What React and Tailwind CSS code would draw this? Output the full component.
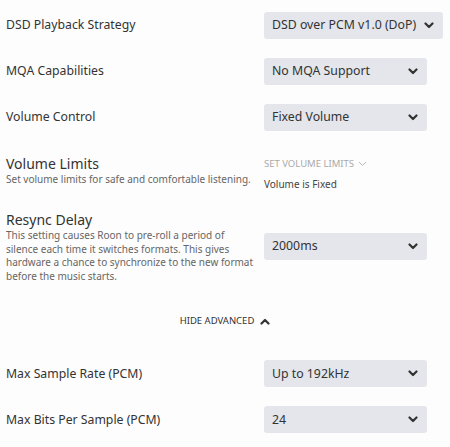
import React from "react";

const Chevron = ({ up = false, className = "" }) => (
  <svg width="10" height="7" viewBox="0 0 10 7" className={`shrink-0 ${className}`}>
    <polyline
      points={up ? "1.5,5.5 5,2 8.5,5.5" : "1.5,1.5 5,5 8.5,1.5"}
      fill="none"
      stroke="currentColor"
      strokeWidth="2.2"
      strokeLinecap="round"
      strokeLinejoin="round"
    />
  </svg>
);

const Select = ({ value }) => (
  <div className="inline-flex shrink-0 items-center justify-between min-w-[163px] h-[27px] pl-2 pr-[9px] gap-[8px] bg-[#e4e6eb] rounded-[3px] text-[12.3px] text-[#333] whitespace-nowrap">
    <span>{value}</span>
    <Chevron />
  </div>
);

const Row = ({ label, value, className = "" }) => (
  <div className={`flex items-center ${className}`}>
    <div className="w-[258px] shrink-0 text-[12.25px] text-[#333]">{label}</div>
    <Select value={value} />
  </div>
);

export default function App() {
  return (
    <div
      className="w-[450px] h-[447px] bg-[#fdfdfd] pl-[6px] pt-[12px] overflow-hidden"
      style={{ fontFamily: '"Noto Sans", "Open Sans", sans-serif' }}
    >
      <Row label="DSD Playback Strategy" value="DSD over PCM v1.0 (DoP)" />
      <Row label="MQA Capabilities" value="No MQA Support" className="mt-[19px]" />
      <Row label="Volume Control" value="Fixed Volume" className="mt-[19px]" />

      {/* Volume limits */}
      <div className="flex items-start mt-[23px]">
        <div className="w-[258px] shrink-0">
          <div className="text-[14px] leading-[19px] text-[#333]">Volume Limits</div>
          <div className="text-[10px] leading-[13.5px] text-[#666]">
            Set volume limits for safe and comfortable listening.
          </div>
        </div>
        <div className="flex flex-col">
          <div className="flex items-center gap-[4px] text-[9.5px] leading-[19px] text-[#aaa] uppercase">
            <span>Set Volume Limits</span>
            <svg width="9" height="6" viewBox="0 0 9 6">
              <polyline points="1,1 4.5,4.5 8,1" fill="none" stroke="#bbb" strokeWidth="1" />
            </svg>
          </div>
          <div className="text-[10px] leading-[14px] text-[#444] mt-[4px]">Volume is Fixed</div>
        </div>
      </div>

      {/* Resync delay */}
      <div className="flex items-center mt-[19px]">
        <div className="w-[258px] shrink-0">
          <div className="text-[14px] leading-[19px] text-[#333]">Resync Delay</div>
          <div className="w-[248px] text-[10px] leading-[13.5px] text-[#666]">
            This setting causes Roon to pre-roll a period of silence each time it switches formats. This gives
            hardware a chance to synchronize to the new format before the music starts.
          </div>
        </div>
        <Select value="2000ms" />
      </div>

      <div className="flex items-center justify-center gap-[6px] mt-[31px] pr-[6px] text-[9.5px] text-[#333] uppercase">
        <span>Hide Advanced</span>
        <Chevron up />
      </div>

      <Row label="Max Sample Rate (PCM)" value="Up to 192kHz" className="mt-[32px]" />
      <Row label="Max Bits Per Sample (PCM)" value="24" className="mt-[19px]" />
    </div>
  );
}
